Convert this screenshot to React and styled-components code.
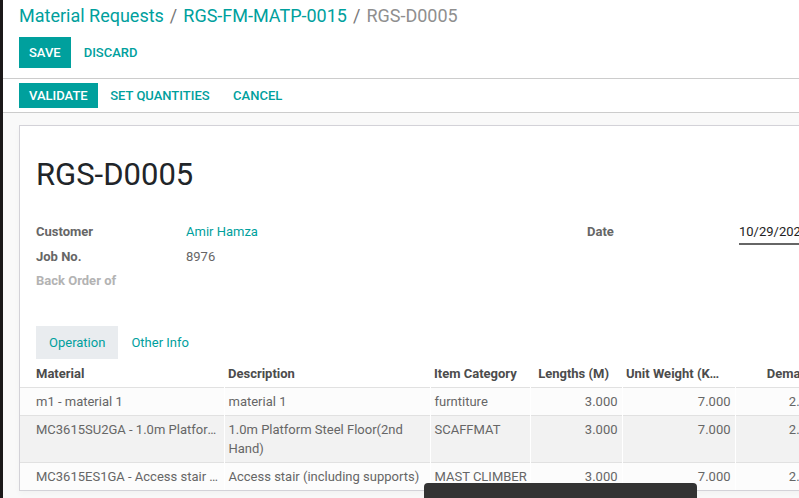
import React from "react";
import styled, { createGlobalStyle } from "styled-components";

const Global = createGlobalStyle`
  html, body {
    margin: 0;
    padding: 0;
    overflow: hidden;
    background: #fff;
  }
  body {
    font-family: Roboto, "Noto Sans", sans-serif;
    font-size: 13px;
    color: #4c4c4c;
  }
`;

const Shell = styled.div`
  display: flex;
  height: 498px;
  width: 799px;
  overflow: hidden;
  position: relative;
`;

const Strip = styled.div`
  width: 3px;
  flex: none;
  background: #1b1819;
`;

const Main = styled.div`
  flex: 1;
  min-width: 0;
  display: flex;
  flex-direction: column;
  background: #fff;
`;

const ControlPanel = styled.div`
  padding: 4px 16px 10px;
  border-bottom: 1px solid #ccc;
`;

const Breadcrumb = styled.div`
  font-size: 18px;
  line-height: 24px;
  white-space: nowrap;
  color: #777;
`;

const Crumb = styled.span`
  color: ${(p) => (p.$active ? "#8f8f8f" : "#00a09d")};
`;

const Sep = styled.span`
  color: #777;
  padding: 0 6px;
`;

const ButtonRow = styled.div`
  display: flex;
  align-items: center;
  gap: ${(p) => p.$gap || 0}px;
  margin-top: ${(p) => p.$top || 0}px;
`;

const Button = styled.button`
  font-family: inherit;
  font-size: 13px;
  font-weight: 500;
  text-transform: uppercase;
  border: none;
  border-radius: 0;
  cursor: pointer;
  height: ${(p) => p.$h}px;
  padding: 0 ${(p) => p.$px}px;
  background: ${(p) => (p.$primary ? "#00a09d" : "transparent")};
  color: ${(p) => (p.$primary ? "#fff" : "#00a09d")};
`;

const StatusBar = styled.div`
  display: flex;
  align-items: center;
  padding: 4px 16px 4px;
  border-bottom: 1px solid #ccc;
`;

const Content = styled.div`
  flex: 1;
  background: #f9f9f9;
  padding: 12px 0 0 16px;
  overflow: hidden;
`;

const Sheet = styled.div`
  width: 1100px;
  background: #fff;
  border: 1px solid #d3d2d8;
  border-right: none;
  box-shadow: 0 3px 6px rgba(0, 0, 0, 0.03);
`;

const Title = styled.h1`
  margin: 0;
  padding: 29px 16px 0;
  font-size: 31px;
  font-weight: 400;
  line-height: 40px;
  color: #212529;
`;

const Groups = styled.div`
  display: flex;
  padding: 25px 16px 0;
`;

const Group = styled.div`
  width: ${(p) => p.$w}px;
  display: grid;
  grid-template-columns: ${(p) => p.$label}px 1fr;
  grid-auto-rows: 24.5px;
  align-content: start;
`;

const Label = styled.div`
  font-weight: 700;
  color: ${(p) => (p.$muted ? "#b3b3b3" : "#666")};
  line-height: 24px;
`;

const Value = styled.div`
  line-height: 24px;
  color: ${(p) => (p.$link ? "#00a09d" : "#666")};
`;

const DateInput = styled.div`
  color: #222;
  line-height: 20px;
  margin-top: 2px;
  border-bottom: 2px solid #666;
  white-space: nowrap;
  width: 200px;
`;

const Tabs = styled.div`
  display: flex;
  padding: 32px 16px 0;
`;

const Tab = styled.div`
  height: 33px;
  line-height: 33px;
  padding: 0 13px;
  color: #00a09d;
  background: ${(p) => (p.$active ? "#e9ecef" : "transparent")};
`;

const Table = styled.table`
  border-collapse: collapse;
  table-layout: fixed;
  width: 1100px;
`;

const Th = styled.th`
  height: 27px;
  padding: 1px ${(p) => p.$pr ?? 13}px 0 4px;
  text-align: ${(p) => p.$align || "left"};
  font-weight: 700;
  color: #4c4c4c;
  white-space: nowrap;
  overflow: hidden;
  text-overflow: ellipsis;
  &:first-child {
    padding-left: 16px;
  }
`;

const Tr = styled.tr`
  background: ${(p) => (p.$even ? "#f2f2f2" : "#fcfcfc")};
  border-top: 1px solid #e1e1e1;
`;

const Td = styled.td`
  padding: 4px 4px;
  line-height: 19px;
  vertical-align: top;
  color: #666;
  text-align: ${(p) => p.$align || "left"};
  border-left: 1px solid #fff;
  white-space: ${(p) => (p.$wrap ? "normal" : "nowrap")};
  overflow: ${(p) => (p.$ellipsis ? "hidden" : "visible")};
  text-overflow: ellipsis;
  &:first-child {
    padding-left: 16px;
    border-left: none;
  }
`;

const Snackbar = styled.div`
  position: absolute;
  left: 424px;
  top: 483px;
  width: 273px;
  height: 30px;
  background: #333;
  border-radius: 4px 4px 0 0;
`;

const columns = [
  { key: "material", label: "Material", width: 204, ellipsis: true },
  { key: "desc", label: "Description", width: 206, wrap: true },
  { key: "cat", label: "Item Category", width: 100 },
  { key: "len", label: "Lengths (M)", width: 92, align: "right" },
  { key: "weight", label: "Unit Weight (KG)", width: 113, align: "right", headAlign: "left" },
  { key: "demand", label: "Demand", width: 91, align: "right", pr: 11 },
  { key: "done", label: "Done", width: 294, align: "right" },
];

const rows = [
  {
    material: "m1 - material 1",
    desc: "material 1",
    cat: "furntiture",
    len: "3.000",
    weight: "7.000",
    demand: "2.000",
    done: "0.000",
  },
  {
    material: "MC3615SU2GA - 1.0m Platform Steel Floor(2nd Hand)",
    desc: "1.0m Platform Steel Floor(2nd Hand)",
    cat: "SCAFFMAT",
    len: "3.000",
    weight: "7.000",
    demand: "2.000",
    done: "0.000",
  },
  {
    material: "MC3615ES1GA - Access stair (including supports)",
    desc: "Access stair (including supports)",
    cat: "MAST CLIMBER",
    len: "3.000",
    weight: "7.000",
    demand: "2.000",
    done: "0.000",
  },
];

const App = () => {
  return (
    <>
      <Global />
      <Shell>
        <Strip />
        <Main>
          <ControlPanel>
            <Breadcrumb>
              <Crumb>Material Requests</Crumb>
              <Sep>/</Sep>
              <Crumb>RGS-FM-MATP-0015</Crumb>
              <Sep>/</Sep>
              <Crumb $active>RGS-D0005</Crumb>
            </Breadcrumb>
            <ButtonRow $top={9} $gap={1}>
              <Button $primary $h={31} $px={10}>Save</Button>
              <Button $h={31} $px={12}>Discard</Button>
            </ButtonRow>
          </ControlPanel>
          <StatusBar>
            <ButtonRow>
              <Button $primary $h={25} $px={10}>Validate</Button>
              <Button $h={25} $px={12.5}>Set Quantities</Button>
              <Button $h={25} $px={11}>Cancel</Button>
            </ButtonRow>
          </StatusBar>
          <Content>
            <Sheet>
              <Title>RGS-D0005</Title>
              <Groups>
                <Group $w={551} $label={150}>
                  <Label>Customer</Label>
                  <Value $link>Amir Hamza</Value>
                  <Label>Job No.</Label>
                  <Value>8976</Value>
                  <Label $muted>Back Order of</Label>
                  <Value />
                </Group>
                <Group $w={500} $label={152}>
                  <Label>Date</Label>
                  <DateInput>10/29/2020 10:24:11</DateInput>
                </Group>
              </Groups>
              <Tabs>
                <Tab $active>Operation</Tab>
                <Tab>Other Info</Tab>
              </Tabs>
              <Table>
                <colgroup>
                  {columns.map((c) => (
                    <col key={c.key} style={{ width: c.width }} />
                  ))}
                </colgroup>
                <thead>
                  <tr>
                    {columns.map((c) => (
                      <Th key={c.key} $align={c.headAlign || c.align} $pr={c.pr}>
                        {c.label}
                      </Th>
                    ))}
                  </tr>
                </thead>
                <tbody>
                  {rows.map((r, i) => (
                    <Tr key={i} $even={i % 2 === 1}>
                      {columns.map((c) => (
                        <Td
                          key={c.key}
                          $align={c.align}
                          $wrap={c.wrap}
                          $ellipsis={c.ellipsis}
                        >
                          {r[c.key]}
                        </Td>
                      ))}
                    </Tr>
                  ))}
                </tbody>
              </Table>
            </Sheet>
          </Content>
        </Main>
        <Snackbar />
      </Shell>
    </>
  );
};

export default App;
